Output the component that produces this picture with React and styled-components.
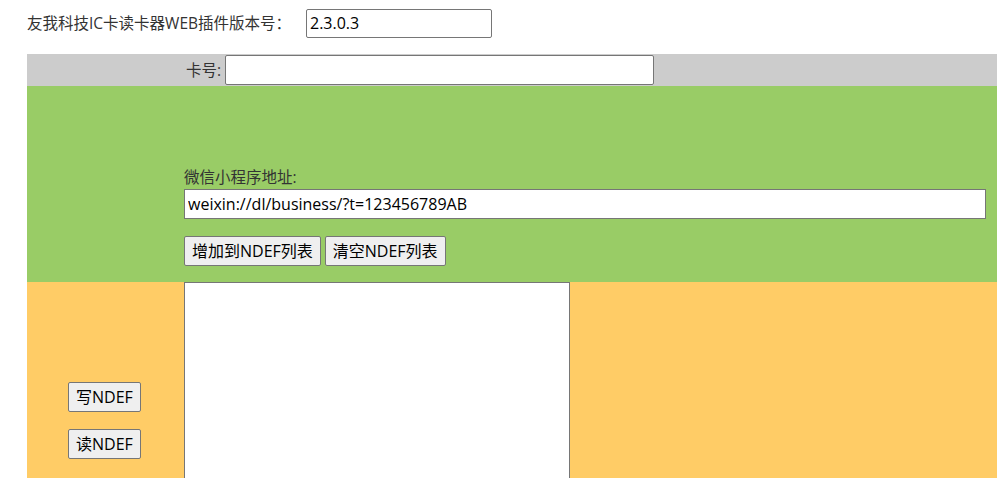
import styled, { createGlobalStyle } from "styled-components";

const FONT = `"Open Sans", "Noto Sans CJK SC", sans-serif`;

const Global = createGlobalStyle`
  html, body {
    margin: 0;
    padding: 0;
    background: #fff;
    overflow: hidden;
  }
  body {
    font-family: ${FONT};
    font-size: 16px;
    color: #333;
  }
`;

const Page = styled.div`
  padding-left: 27px;
  width: 970px;
`;

const Header = styled.div`
  display: flex;
  align-items: center;
  height: 46px;
  padding-bottom: 8px;
`;

const HeaderLabel = styled.span`
  width: 279px;
  font-size: 15.5px;
  line-height: 20px;
  color: #333;
  white-space: nowrap;
`;

const TextBox = styled.input`
  box-sizing: border-box;
  height: ${(p) => p.h || 29}px;
  width: ${(p) => p.w}px;
  border: 1px solid #767676;
  border-radius: ${(p) => (p.round ? 2 : 0)}px;
  padding: 0 3px;
  font-family: ${FONT};
  font-size: 16px;
  color: #000;
  background: #fff;
  margin: 0;
`;

const Table = styled.div`
  display: grid;
  grid-template-columns: 157px 1fr;
`;

const Row = styled.div`
  grid-column: 1 / 3;
  display: grid;
  grid-template-columns: 157px 1fr;
  background: ${(p) => p.bg};
  height: ${(p) => p.h}px;
`;

const Cell = styled.div`
  display: flex;
  flex-direction: column;
  justify-content: ${(p) => p.justify || "flex-start"};
  align-items: flex-start;
  padding: ${(p) => p.pad || "0"};
  box-sizing: border-box;
`;

const Inline = styled.div`
  display: flex;
  align-items: center;
  gap: 4px;
  height: 100%;
  padding-left: 2px;
`;

const Label = styled.span`
  font-size: 15.5px;
  line-height: 20px;
  color: #333;
  margin-bottom: ${(p) => p.mb || 0}px;
  white-space: nowrap;
`;

const Button = styled.button`
  box-sizing: border-box;
  height: 30px;
  padding: 0 7px;
  border: 1px solid #767676;
  border-radius: 2px;
  background: #efefef;
  font-family: ${FONT};
  font-size: 16px;
  line-height: 20px;
  color: #000;
  margin: 0;
  white-space: nowrap;
`;

const ButtonRow = styled.div`
  display: flex;
  gap: 4px;
  margin-top: 17px;
`;

const ButtonStack = styled.div`
  display: flex;
  flex-direction: column;
  align-items: flex-start;
  gap: 17px;
  padding-top: 100px;
  padding-left: 41px;
`;

const Area = styled.textarea`
  box-sizing: border-box;
  width: 386px;
  height: 260px;
  border: 1px solid #767676;
  margin: 0;
  resize: none;
  background: #fff;
`;

export default function App() {
  return (
    <>
      <Global />
      <Page>
        <Header>
          <HeaderLabel>友我科技IC卡读卡器WEB插件版本号：</HeaderLabel>
          <TextBox w={186} round defaultValue="2.3.0.3" />
        </Header>
        <Table>
          <Row bg="#cccccc" h={32}>
            <Cell />
            <Cell>
              <Inline>
                <Label>卡号:</Label>
                <TextBox w={429} h={30} round />
              </Inline>
            </Cell>
          </Row>
          <Row bg="#99cc66" h={196}>
            <Cell />
            <Cell justify="flex-end" pad="0 0 16px 0">
              <Label mb={2}>微信小程序地址:</Label>
              <TextBox w={802} h={30} defaultValue="weixin://dl/business/?t=123456789AB" />
              <ButtonRow>
                <Button>增加到NDEF列表</Button>
                <Button>清空NDEF列表</Button>
              </ButtonRow>
            </Cell>
          </Row>
          <Row bg="#ffcc66" h={200}>
            <Cell>
              <ButtonStack>
                <Button>写NDEF</Button>
                <Button>读NDEF</Button>
              </ButtonStack>
            </Cell>
            <Cell>
              <Area />
            </Cell>
          </Row>
        </Table>
      </Page>
    </>
  );
}
